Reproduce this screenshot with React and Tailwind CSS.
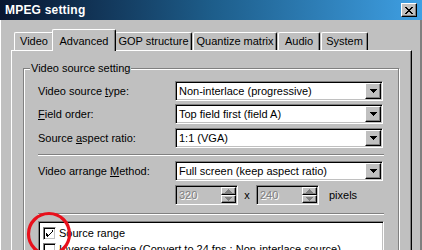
import React from "react";

const sunken =
  "border border-t-[#808080] border-l-[#808080] border-r-white border-b-white shadow-[inset_1px_1px_0_#000,inset_-1px_-1px_0_#c0c0c0]";
const raised =
  "border border-t-white border-l-white border-r-black border-b-black shadow-[inset_-1px_-1px_0_#808080]";

const Arrow = ({ up, color = "#000" }) => (
  <svg width="7" height="4" viewBox="0 0 7 4">
    <path d={up ? "M3 0h1v1h1v1h1v1h1v1H0V3h1V2h1V1h1z" : "M0 0h7v1H6v1H5v1H4v1H3V3H2V2H1V1H0z"} fill={color} />
  </svg>
);

const Combo = ({ value }) => (
  <div className={`flex items-center h-[20px] w-[208px] bg-white p-[1px] ${sunken}`}>
    <span className="flex-1 pl-[2px] leading-none truncate">{value}</span>
    <div className={`w-[16px] h-[16px] bg-[#c0c0c0] flex items-center justify-center ${raised}`}>
      <Arrow />
    </div>
  </div>
);

const Spin = ({ value }) => (
  <div className={`flex items-center h-[20px] w-[63px] bg-[#c0c0c0] p-[1px] ${sunken}`}>
    <span className="flex-1 pl-[2px] leading-none text-[#808080] [text-shadow:1px_1px_0_#fff]">{value}</span>
    <div className="flex flex-col w-[15px] h-[16px]">
      <div className={`h-[8px] bg-[#c0c0c0] flex items-center justify-center ${raised}`}>
        <Arrow up color="#808080" />
      </div>
      <div className={`h-[8px] bg-[#c0c0c0] flex items-center justify-center ${raised}`}>
        <Arrow color="#808080" />
      </div>
    </div>
  </div>
);

const Row = ({ label, value, className = "" }) => (
  <div className={`flex items-center ${className}`}>
    <span className="w-[137px]">{label}</span>
    <Combo value={value} />
  </div>
);

const Separator = ({ className = "" }) => (
  <div className={`w-[346px] h-[2px] border-t border-t-[#808080] border-b border-b-white ${className}`} />
);

const Check = ({ checked }) => (
  <div className={`w-[13px] h-[13px] shrink-0 bg-white flex items-center justify-center ${sunken}`}>
    {checked && (
      <svg width="7" height="7" viewBox="0 0 7 7">
        <path d="M6 0h1v2H6v1H5v1H4v1H3v1H2v1H1V6H0V3h1v1h1v1h1V4h1V3h1V2h1z" fill="#000" />
      </svg>
    )}
  </div>
);

const tabs = ["Video", "Advanced", "GOP structure", "Quantize matrix", "Audio", "System"];
const tabWidths = ["w-[40px]", "w-[64px]", "w-[77px]", "w-[84px]", "w-[42px]", "w-[47px]"];

export default function App() {
  return (
    <div className="relative w-[422px] h-[250px] overflow-hidden bg-[#c0c0c0] flex flex-col font-['Liberation_Sans',Arial,sans-serif] text-[11px] text-black select-none">
      {/* title bar */}
      <div className="h-[20px] shrink-0 flex items-center justify-between pl-[5px] pr-[5px] bg-gradient-to-r from-[#081630] via-[#1d5d8a] to-[#3fa0e4]">
        <span className="text-white font-bold text-[12px] tracking-[0.2px]">MPEG setting</span>
        <div className={`w-[16px] h-[14px] bg-[#c0c0c0] flex items-center justify-center ${raised}`}>
          <svg width="8" height="7" viewBox="0 0 8 7">
            <path d="M0 0h2v1h1v1h2V1h1V0h2v1H7v1H6v1H5v1h1v1h1v1h1v1H6V6H5V5H3v1H2v1H0V6h1V5h1V4h1V3H2V2H1V1H0z" fill="#000" />
          </svg>
        </div>
      </div>

      <div className="flex-1 border-l border-l-white border-r-2 border-r-[#808080]">
        {/* tabs */}
        <div className="flex items-end h-[21px] mt-[9px] pl-[13px]">
          {tabs.map((t, i) =>
            i === 1 ? (
              <div
                key={t}
                className={`${tabWidths[i]} h-[22px] -mx-[2px] -mb-[1px] relative z-10 bg-[#c0c0c0] border-t border-l border-t-white border-l-white border-r border-r-black shadow-[inset_-1px_0_0_#808080] rounded-t-[2px] flex items-start justify-center pt-[3px]`}
              >
                {t}
              </div>
            ) : (
              <div
                key={t}
                className={`${tabWidths[i]} h-[18px] bg-[#c0c0c0] border-t border-l border-t-white border-l-white border-r border-r-black shadow-[inset_-1px_0_0_#808080] rounded-t-[2px] flex items-center justify-center ${i === 0 ? "" : "ml-[1px]"}`}
              >
                {t}
              </div>
            )
          )}
        </div>

        {/* tab panel */}
        <div className="ml-[10px] w-[401px] h-[220px] border-t border-l border-t-white border-l-white border-r border-r-black shadow-[inset_-1px_0_0_#808080] pl-[11px] pt-[17px]">
          <div className="relative w-[376px] h-[200px] border border-[#808080] shadow-[1px_1px_0_#fff,inset_1px_1px_0_#fff] pl-[14px] pt-[12px]">
            <span className="absolute left-[6px] -top-[7px] px-[1px] bg-[#c0c0c0] leading-[13px]">Video source setting</span>

            <Row label={<>Video source <u>t</u>ype:</>} value="Non-interlace (progressive)" />
            <Row label={<><u>F</u>ield order:</>} value="Top field first (field A)" className="mt-[3px]" />
            <Row label={<>Source <u>a</u>spect ratio:</>} value="1:1 (VGA)" className="mt-[4px]" />
            <Separator className="mt-[6px]" />
            <Row label={<>Video arrange <u>M</u>ethod:</>} value="Full screen (keep aspect ratio)" className="mt-[5px]" />

            <div className="flex items-center mt-[4px] pl-[137px]">
              <Spin value="320" />
              <span className="w-[18px] text-center">x</span>
              <Spin value="240" />
              <span className="ml-[10px]">pixels</span>
            </div>

            <Separator className="mt-[8px]" />

            <div className={`mt-[6px] w-[346px] h-[60px] bg-white p-[3px] pl-[4px] ${sunken}`}>
              <div className="flex items-center h-[16px] gap-[3px]">
                <Check checked />
                <span className="leading-[13px] whitespace-nowrap">Source range</span>
              </div>
              <div className="flex items-center h-[16px] gap-[3px]">
                <Check />
                <span className="leading-[13px] whitespace-nowrap">Inverse telecine (Convert to 24 fps : Non-interlace source)</span>
              </div>
            </div>
          </div>
        </div>
      </div>

      {/* red annotation circle */}
      <svg className="absolute left-[26px] top-[211px]" width="46" height="46" viewBox="0 0 46 46">
        <ellipse cx="23" cy="23" rx="20.5" ry="20.5" fill="none" stroke="#e8101c" strokeWidth="3.2" />
      </svg>
    </div>
  );
}
